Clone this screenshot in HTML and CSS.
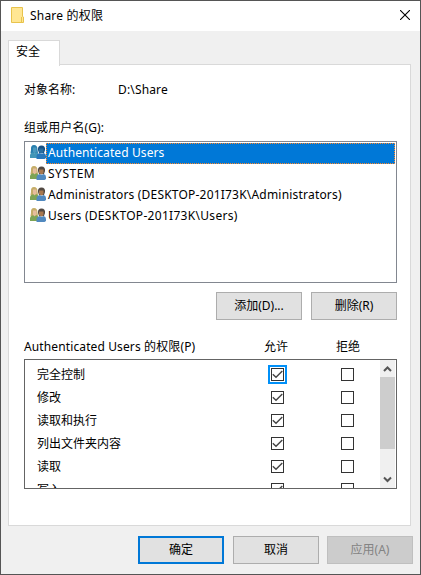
FILE: index.html
```html
<!DOCTYPE html>
<html lang="zh-CN">
<head>
<meta charset="utf-8">
<title>Share 的权限</title>
<link rel="stylesheet" href="styles.css">
</head>
<body>
<svg class="defs" width="0" height="0" aria-hidden="true">
  <symbol id="users" viewBox="0 0 16 16">
    <path class="skin-a" d="M1 6Q.5 1 4 1t3.500 4.500L8 9H.5Z"/>
    <path class="face" d="M3 3.500h3.500v4L5 9H4L3 7.500Z"/>
    <path class="coat-a" d="M0 14v-3q0-2 3-2.800l1.500 1 2-1q2 .8 2 2.800v3Z"/>
    <path class="hair-b" d="M8 6Q7.500 1.500 11.500 1.500T15 6l-1 3H9Z"/>
    <path class="face-b" d="M9 4.500h4.500v3.500L12 9.500h-1L9 8Z"/>
    <path class="coat-b" d="M6.500 15v-2.500Q6.500 9.500 10 9l1.500 1 2-1q2.500.3 2.500 3v2l-1.500 1Z"/>
  </symbol>
  <symbol id="check" viewBox="0 0 11 11">
    <path d="M.8 5.200 4 8.200 10.300 2" fill="none" stroke="#444" stroke-width="1.400"/>
  </symbol>
</svg>
<div class="window">
  <header class="titlebar">
    <svg class="folder" width="14" height="17" viewBox="0 0 14 17">
      <path d="M.5.500h11v9l1 .5v5.500H.5Z" fill="#ffe693" stroke="#e8c34c"/>
      <path d="M10.500 10v5.500" stroke="#e8c34c"/>
    </svg>
    <span class="title">Share 的权限</span>
    <svg class="close" width="10" height="10" viewBox="0 0 10 10"><path d="M0 0l10 10M10 0L0 10" stroke="#000" stroke-width="1.100"/></svg>
  </header>
  <div class="tabs"><div class="tab">安全</div></div>
  <main class="panel">
    <div class="object"><span class="object-label">对象名称:</span><span class="path">D:\Share</span></div>
    <div class="group-label">组或用户名(G):</div>
    <ul class="users">
      <li class="user selected"><svg class="avatar blue"><use href="#users"/></svg><span class="name">Authenticated Users</span></li>
      <li class="user"><svg class="avatar"><use href="#users"/></svg><span class="name system">SYSTEM</span></li>
      <li class="user"><svg class="avatar"><use href="#users"/></svg><span class="name admins">Administrators (DESKTOP-201I73K\Administrators)</span></li>
      <li class="user"><svg class="avatar"><use href="#users"/></svg><span class="name members">Users (DESKTOP-201I73K\Users)</span></li>
    </ul>
    <div class="actions"><button class="btn">添加(D)...</button><button class="btn">删除(R)</button></div>
    <div class="perm-head"><span class="perm-title">Authenticated Users 的权限(P)</span><span class="allow">允许</span><span class="deny">拒绝</span></div>
    <div class="perms">
      <div class="rows">
        <div class="row"><span class="perm">完全控制</span><span class="box focus"><svg><use href="#check"/></svg></span><span class="box"></span></div>
        <div class="row"><span class="perm">修改</span><span class="box"><svg><use href="#check"/></svg></span><span class="box"></span></div>
        <div class="row"><span class="perm">读取和执行</span><span class="box"><svg><use href="#check"/></svg></span><span class="box"></span></div>
        <div class="row"><span class="perm">列出文件夹内容</span><span class="box"><svg><use href="#check"/></svg></span><span class="box"></span></div>
        <div class="row"><span class="perm">读取</span><span class="box"><svg><use href="#check"/></svg></span><span class="box"></span></div>
        <div class="row"><span class="perm">写入</span><span class="box"><svg><use href="#check"/></svg></span><span class="box"></span></div>
      </div>
      <div class="scrollbar">
        <svg class="arrow" width="15" height="17" viewBox="0 0 15 17"><path d="M4 11l3.500-3.500L11 11" fill="none" stroke="#555" stroke-width="2"/></svg>
        <div class="thumb"></div>
        <svg class="arrow down" width="15" height="17" viewBox="0 0 15 17"><path d="M4 6.500l3.500 3.500L11 6.500" fill="none" stroke="#555" stroke-width="2"/></svg>
      </div>
    </div>
  </main>
  <footer class="footer"><button class="btn primary">确定</button><button class="btn">取消</button><button class="btn apply" disabled>应用(A)</button></footer>
</div>
</body>
</html>
```

FILE: styles.css
```css
* { box-sizing: border-box; }
body { margin: 0; font: 12px/16px "Noto Sans", "Noto Sans CJK SC", sans-serif; color: #000; }
.defs { position: absolute; }
.window { width: 421px; height: 575px; border: 1px solid #555; background: #f0f0f0; overflow: hidden; white-space: nowrap; }
.titlebar { height: 30px; background: #fff; display: flex; align-items: flex-start; padding: 0 10px 0 10px; }
.folder { margin-top: 6px; }
.title { margin: 7px 0 0 5px; letter-spacing: .2px; }
.close { margin: 9px 0 0 auto; }
.tabs { height: 34px; padding: 9px 0 0 7px; display: flex; }
.tab { position: relative; width: 52px; height: 26px; background: #fff; border: 1px solid #d9d9d9; border-bottom: 0; padding: 3px 0 0 7px; }
.panel { margin-left: 7px; width: 403px; height: 462px; background: #fff; border: 1px solid #d9d9d9; margin-top: -1px; padding: 17px 13px 0 15px; }
.object { display: flex; height: 38px; }
.object-label { width: 94px; }
.path { letter-spacing: .15px; }
.group-label { height: 21px; letter-spacing: .1px; }
.users { width: 373px; height: 142px; margin: 0; padding: 1px; list-style: none; border: 1px solid #828790; }
.user { height: 21px; display: flex; }
.avatar { width: 16px; height: 16px; margin: 1px 0 0 4px; flex: none; --hair: #c5ad68; --face: #e5bd9d; --coat: #7da455; --hair2: #514842; --face2: #a8784f; --coat2: #5189bf; }
.blue { --hair: #287fae; --face: #4a98bd; --coat: #4296b7; --hair2: #154f83; --face2: #286d9e; --coat2: #2777bb; }
.skin-a { fill: var(--hair); }
.face { fill: var(--face); }
.coat-a { fill: var(--coat); }
.hair-b { fill: var(--hair2); }
.face-b { fill: var(--face2); }
.coat-b { fill: var(--coat2); }
.name { flex: 1; padding: 2px 0 0 2px; letter-spacing: .1px; }
.system { letter-spacing: .5px; }
.admins { letter-spacing: .2px; }
.members { letter-spacing: .3px; }
.selected .name { background: #0078d7; color: #fff; outline: 1px dotted #ff8728; outline-offset: -1px; }
.btn { width: 86px; height: 28px; padding: 0; border: 1px solid #adadad; background: #e1e1e1; font: inherit; color: #000; }
.btn:disabled { background: #ccc; border-color: #bfbfbf; color: #838383; }
.primary { border: 2px solid #0078d7; }
.actions { display: flex; justify-content: flex-end; gap: 9px; margin-top: 9px; }
.perm-head { display: flex; height: 39px; padding-top: 19px; }
.perm-title { width: 240px; letter-spacing: .12px; }
.allow { width: 72px; }
.perms { width: 373px; height: 130px; border: 1px solid #646464; display: flex; overflow: hidden; }
.rows { flex: 1; min-width: 0; padding-top: 3px; }
.row { height: 23px; display: flex; align-items: center; padding-left: 12px; }
.perm { width: 234px; flex: none; }
.box { width: 13px; height: 13px; border: 1px solid #333; margin-right: 57px; flex: none; }
.box svg { display: block; width: 11px; height: 11px; }
.focus { box-shadow: 0 0 0 1px #fff, 0 0 0 3px #0090f8; }
.scrollbar { width: 15px; flex: none; margin-right: 1px; background: #f0f0f0; display: flex; flex-direction: column; }
.arrow { flex: none; }
.thumb { height: 72px; background: #cdcdcd; }
.down { margin-top: auto; }
.footer { display: flex; gap: 9px; padding: 10px 0 0 137px; }
.apply { margin-left: -1px; }
```
